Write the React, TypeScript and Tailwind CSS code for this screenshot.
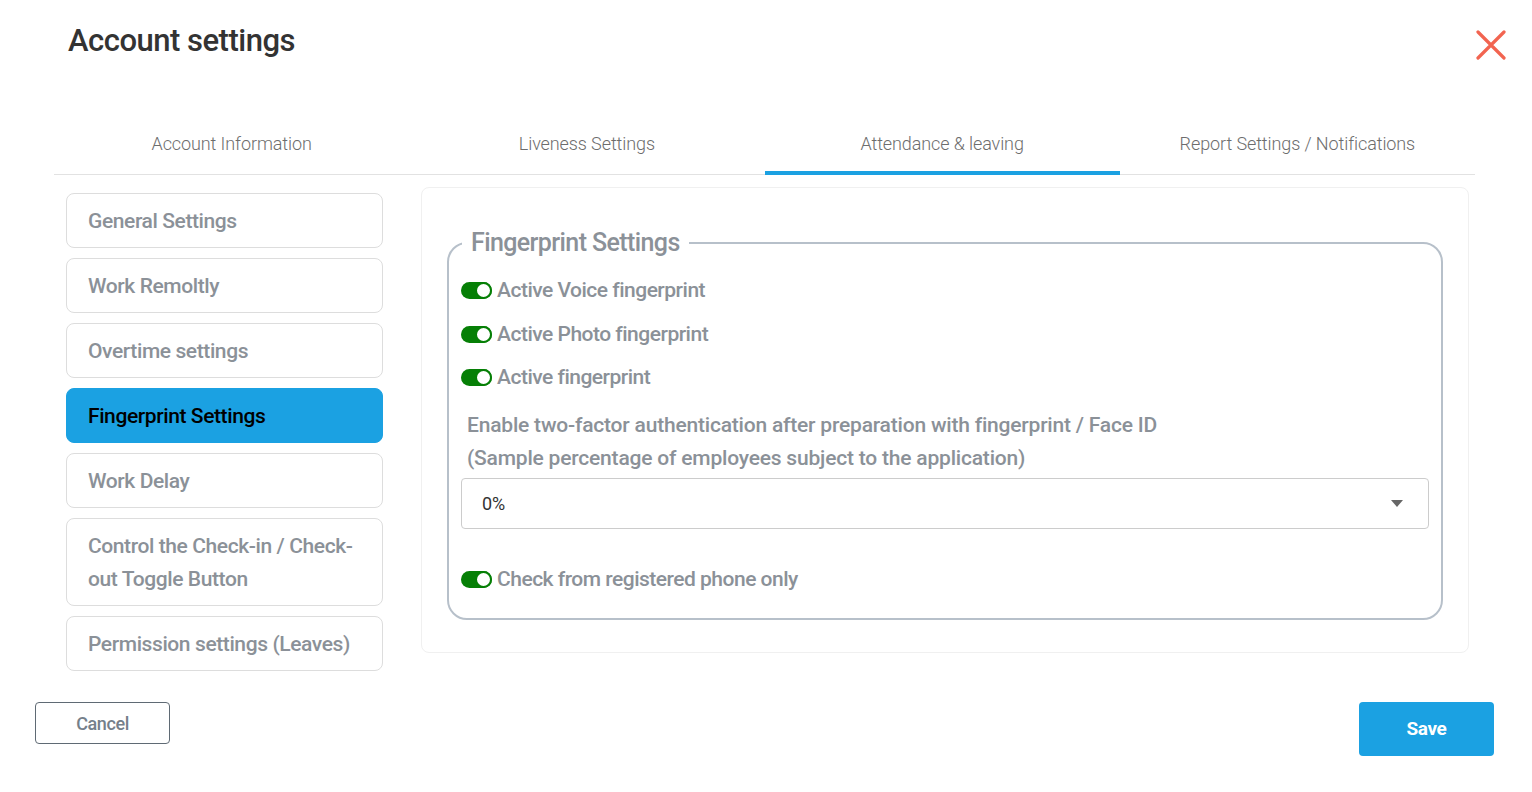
import React from "react";

const sideItems = [
  "General Settings",
  "Work Remoltly",
  "Overtime settings",
  "Fingerprint Settings",
  "Work Delay",
  "Control the Check-in / Check-out Toggle Button",
  "Permission settings (Leaves)",
];

const tabs = [
  "Account Information",
  "Liveness Settings",
  "Attendance & leaving",
  "Report Settings / Notifications",
];

function Toggle() {
  return (
    <span className="relative inline-flex h-[17px] w-[31px] shrink-0 items-center rounded-full bg-[#067f06]">
      <span className="absolute right-0 top-0 h-[17px] w-[17px] rounded-full border-[2px] border-[#067f06] bg-white" />
    </span>
  );
}

function ToggleRow({ label }: { label: string }) {
  return (
    <div className="flex h-[43.5px] items-center gap-[5px]">
      <Toggle />
      <span className="text-[21px] font-medium tracking-[-0.5px] text-[#8b9198]">{label}</span>
    </div>
  );
}

export default function App() {
  return (
    <div
      className="h-[792px] w-full overflow-hidden bg-white"
      style={{ fontFamily: "Roboto, 'Noto Sans', sans-serif" }}
    >
      {/* Header */}
      <div className="flex h-[115px] items-start justify-between pl-[68px] pr-[26px] pt-[19px]">
        <h1 className="text-[31px] font-medium leading-[44px] tracking-[-0.5px] text-[#333]">
          Account settings
        </h1>
        <button className="mt-[11px] h-[30px] w-[30px]">
          <svg viewBox="0 0 30 30" className="h-[30px] w-[30px]">
            <path d="M2 2 L28 28 M28 2 L2 28" stroke="#f26450" strokeWidth="3.2" strokeLinecap="round" />
          </svg>
        </button>
      </div>

      {/* Tabs */}
      <div className="mx-[54px] mr-[57px] flex h-[60px] border-b border-[#e2e2e2]">
        {tabs.map((t, i) => (
          <div
            key={t}
            className={
              "flex flex-1 items-center justify-center pb-[3px] text-[18px] font-light tracking-[-0.1px] text-[#6d6d6d] " +
              (i === 2 ? "border-b-[4px] border-[#1ba1e2] mb-[-1px] pt-[4px] pb-0" : "")
            }
          >
            {t}
          </div>
        ))}
      </div>

      {/* Body */}
      <div className="mt-[12px] flex pl-[66px] pr-[63px]">
        <div className="mt-[6px] flex w-[317px] shrink-0 flex-col gap-[10px]">
          {sideItems.map((s, i) => (
            <div
              key={s}
              className={
                "rounded-lg border px-[21px] pb-[9px] pt-[11px] text-[21px] font-medium leading-[33px] tracking-[-0.4px] " +
                (i === 3
                  ? "border-[#1ba1e2] bg-[#1ba1e2] text-black"
                  : "border-[#dddddd] bg-white text-[#8b9198]")
              }
            >
              {s}
            </div>
          ))}
        </div>

        <div className="ml-[38px] h-[466px] flex-1 rounded-lg border border-[#f0f0f0] px-[25px] pt-[40px]">
          <fieldset className="rounded-[20px] border-[2px] border-[#b7c0ca] px-[12px] pb-[17px]">
            <legend className="ml-[1px] px-[9px] text-[25px] font-medium leading-[30px] tracking-[-0.6px] text-[#8b9198]">
              Fingerprint Settings
            </legend>
            <div className="pt-[11px]">
              <ToggleRow label="Active Voice fingerprint" />
              <ToggleRow label="Active Photo fingerprint" />
              <ToggleRow label="Active fingerprint" />
            </div>
            <div className="mt-[9px] pl-[6px] text-[21px] font-medium leading-[33px] tracking-[-0.2px] text-[#8b9198]">
              <div>Enable two-factor authentication after preparation with fingerprint / Face ID</div>
              <div>(Sample percentage of employees subject to the application)</div>
            </div>
            <div className="mt-[3px] flex h-[51px] items-center justify-between rounded-[4px] border border-[#cccccc] px-[20px]">
              <span className="text-[18px] text-[#333]">0%</span>
              <svg viewBox="0 0 12 7" className="mr-[5px] h-[7px] w-[12px]">
                <path d="M0 0 L12 0 L6 7 Z" fill="#666" />
              </svg>
            </div>
            <div className="mt-[29px]">
              <ToggleRow label="Check from registered phone only" />
            </div>
          </fieldset>
        </div>
      </div>

      {/* Footer */}
      <div className="mt-[31px] flex items-start justify-between pl-[35px] pr-[38px]">
        <button className="h-[42px] w-[135px] rounded-[4px] border border-[#5f6a74] text-[18px] font-medium tracking-[-0.4px] text-[#75808a]">
          Cancel
        </button>
        <button className="h-[54px] w-[135px] rounded-[4px] bg-[#1ba1e2] text-[19px] font-bold tracking-[-0.4px] text-white">
          Save
        </button>
      </div>
    </div>
  );
}
